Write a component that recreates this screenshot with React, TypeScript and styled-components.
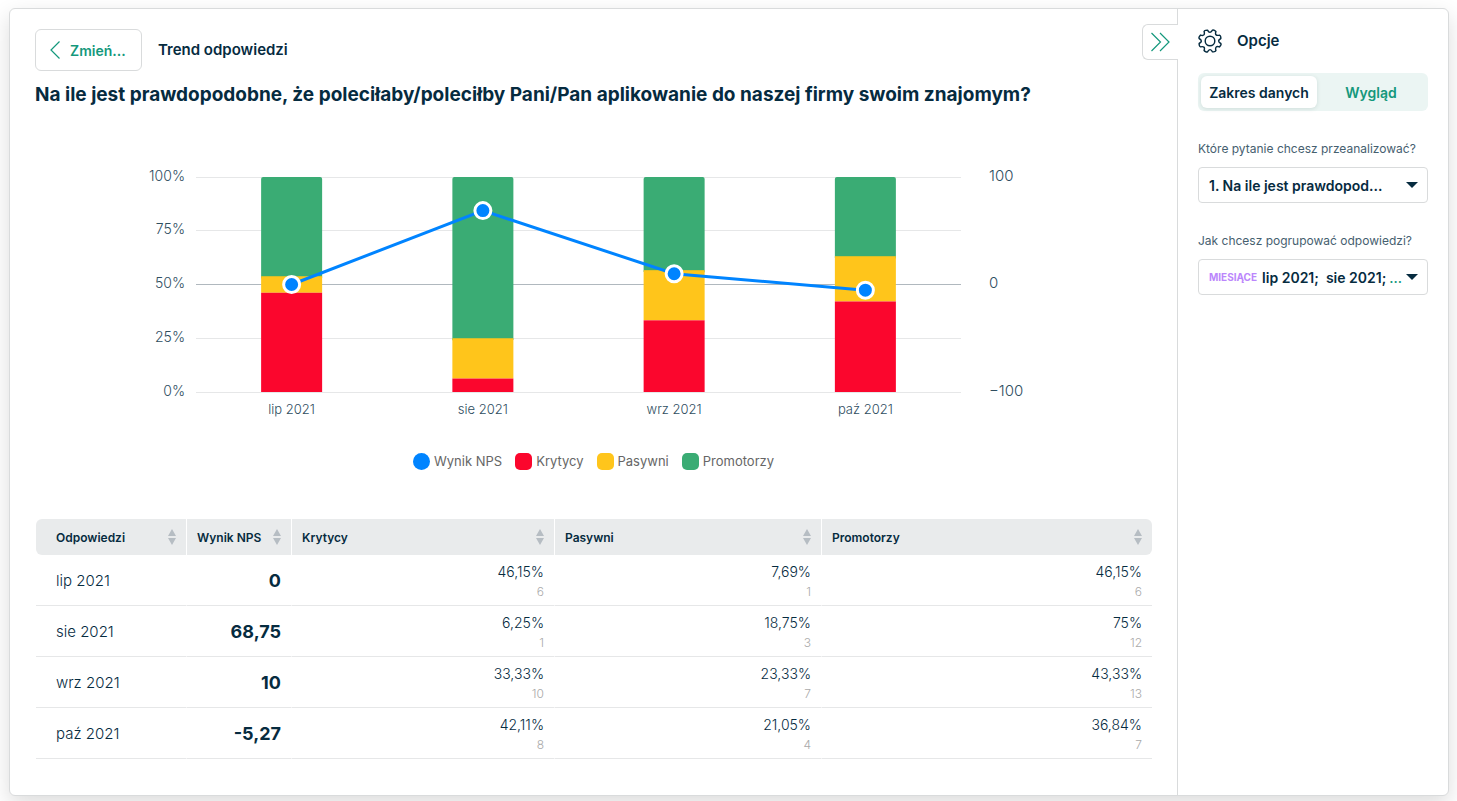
import React from "react";
import styled, { createGlobalStyle } from "styled-components";

const ink = "#062b3f";
const green = "#14987c";
const line = "#d9dbdc";
const soft = "#e6e7e8";

const GlobalStyle = createGlobalStyle`
  * { box-sizing: border-box; }
  body {
    margin: 0;
    background: #fff;
    color: ${ink};
    font-family: Inter, "Liberation Sans", sans-serif;
    font-size: 14px;
  }
  button, select { font-family: inherit; color: inherit; }
`;

const Page = styled.div`
  padding: 8px 8px 5px 9px;
  overflow: hidden;
`;

const Card = styled.div`
  display: flex;
  min-height: calc(100vh - 13px);
  border: 1px solid ${line};
  border-radius: 6px;
  background: #fff;
  box-shadow: 0 8px 22px rgba(0, 0, 0, 0.14);
`;

const Main = styled.main`
  flex: 1;
  min-width: 0;
  padding: 20px 25px;
`;

const Header = styled.header`
  display: flex;
  align-items: center;
  gap: 16px;
`;

const BackButton = styled.button`
  display: flex;
  align-items: center;
  gap: 10px;
  width: 107px;
  height: 42px;
  padding: 0 14px;
  border: 1px solid ${line};
  border-radius: 6px;
  background: #fff;
  color: ${green};
  font-size: 14px;
  font-weight: 600;
`;

const ViewName = styled.h2`
  margin: 0;
  font-size: 15px;
  font-weight: 600;
  line-height: 20px;
`;

const Question = styled.h1`
  margin: 10px 0 42px;
  font-size: 19px;
  font-weight: 700;
  line-height: 27px;
`;

const ChartSvg = styled.svg`
  display: block;
  width: 100%;
  height: auto;
`;

const AxisText = styled.text`
  font-size: 15px;
  font-weight: 300;
  fill: #2f4e5f;
`;

const PercentAxisText = styled(AxisText)`
  font-size: 14px;
`;

const CategoryText = styled.text`
  font-size: 13px;
  font-weight: 300;
  fill: #2f4e5f;
`;

const Legend = styled.ul`
  display: flex;
  justify-content: center;
  gap: 13px;
  margin: 20px 0 47px;
  padding: 0;
  list-style: none;
`;

const LegendItem = styled.li`
  display: flex;
  align-items: center;
  gap: 4px;
  color: #666;
  font-size: 13px;
  line-height: 22px;
`;

const Swatch = styled.span<{ $color: string; $round?: boolean }>`
  width: 17px;
  height: 17px;
  border-radius: ${(p) => (p.$round ? "50%" : "5px")};
  background: ${(p) => p.$color};
`;

const Table = styled.table`
  width: 100%;
  padding-left: 1px;
  border-spacing: 0;
  table-layout: fixed;
`;

const Th = styled.th`
  height: 36px;
  padding: 0 10px;
  border-right: 1px solid #fff;
  background: #e9ebec;
  &:first-child {
    padding-left: 20px;
    border-radius: 6px 0 0 6px;
  }
  &:last-child {
    border-right: 0;
    border-radius: 0 6px 6px 0;
  }
`;

const SortButton = styled.button`
  display: flex;
  align-items: center;
  justify-content: space-between;
  width: 100%;
  padding: 0;
  border: 0;
  background: none;
  font-size: 12px;
  font-weight: 600;
`;

const Td = styled.td`
  padding: 5px 10px;
  border-right: 1px solid #fff;
  border-bottom: 1px solid ${soft};
  text-align: right;
  &:last-child { border-right: 0; }
`;

const RowName = styled.th`
  padding: 0 20px;
  border-right: 1px solid #fff;
  border-bottom: 1px solid ${soft};
  font-size: 15px;
  font-weight: 300;
  text-align: left;
`;

const Score = styled.strong`
  font-size: 18px;
  font-weight: 700;
`;

const Percent = styled.div`
  font-size: 14px;
  font-weight: 300;
  line-height: 24px;
`;

const Count = styled.div`
  color: #aaa;
  font-size: 12px;
  font-weight: 300;
  line-height: 16px;
`;

const Aside = styled.aside`
  position: relative;
  flex: none;
  width: 271px;
  padding: 20px;
  border-left: 1px solid ${line};
`;

const CollapseButton = styled.button`
  position: absolute;
  top: 15px;
  left: -36px;
  display: flex;
  align-items: center;
  width: 36px;
  height: 36px;
  padding: 0 7px;
  border: 1px solid ${line};
  border-right: 0;
  border-radius: 6px 0 0 6px;
  background: #fff;
`;

const AsideTitle = styled.h2`
  display: flex;
  align-items: center;
  gap: 15px;
  margin: 0 0 20px;
  font-size: 15px;
  font-weight: 600;
  line-height: 24px;
`;

const Tabs = styled.div`
  display: flex;
  height: 38px;
  padding: 3px;
  border-radius: 6px;
  background: #ebf5f3;
`;

const Tab = styled.button<{ $active?: boolean }>`
  flex: 1 1 auto;
  padding: 0 6px;
  border: 0;
  border-radius: 6px;
  background: ${(p) => (p.$active ? "#fff" : "transparent")};
  box-shadow: ${(p) => (p.$active ? "0 1px 4px rgba(0, 60, 50, 0.12)" : "none")};
  color: ${(p) => (p.$active ? ink : green)};
  font-size: 14px;
  font-weight: 600;
  flex-basis: ${(p) => (p.$active ? "116px" : "108px")};
`;

const Field = styled.div`
  margin-top: 28px;
`;

const Label = styled.label`
  display: block;
  margin-bottom: 8px;
  color: #46606f;
  font-size: 12px;
  line-height: 20px;
  white-space: nowrap;
`;

const SelectBox = styled.div`
  display: flex;
  align-items: center;
  height: 36px;
  padding: 0 9px 0 10px;
  border: 1px solid ${line};
  border-radius: 4px;
  white-space: nowrap;
`;

const Select = styled.select<{ $grow?: boolean }>`
  flex: ${(p) => (p.$grow ? 1 : "none")};
  min-width: 0;
  padding: 0;
  border: 0;
  appearance: none;
  background: none;
  font-size: 14px;
  font-weight: 600;
`;

const GroupTag = styled.span`
  margin-right: 5px;
  color: #bb86fc;
  font-size: 10px;
  font-weight: 700;
`;

const More = styled.span`
  flex: 1;
  color: ${green};
  font-weight: 500;
  text-align: right;
  margin-right: 4px;
`;

const colors = { nps: "#0084ff", red: "#fb062d", yellow: "#ffc51b", green: "#3aac74" };

type Share = [string, number];
const rows: { name: string; label: string; nps: number; bad: Share; mid: Share; good: Share }[] = [
  { name: "lip 2021", label: "0", nps: 0, bad: ["46,15%", 6], mid: ["7,69%", 1], good: ["46,15%", 6] },
  { name: "sie 2021", label: "68,75", nps: 68.75, bad: ["6,25%", 1], mid: ["18,75%", 3], good: ["75%", 12] },
  { name: "wrz 2021", label: "10", nps: 10, bad: ["33,33%", 10], mid: ["23,33%", 7], good: ["43,33%", 13] },
  { name: "paź 2021", label: "-5,27", nps: -5.27, bad: ["42,11%", 8], mid: ["21,05%", 4], good: ["36,84%", 7] },
];

const plot = { left: 161, right: 926, top: 27, bottom: 242, bar: 61 };
const step = (plot.right - plot.left) / rows.length;
const centre = (i: number) => plot.left + step * (i + 0.5);
const yOf = (share: number) => plot.bottom - (plot.bottom - plot.top) * share;

function Chart() {
  const points = rows.map((r, i) => [centre(i), yOf((r.nps + 100) / 200)]);
  return (
    <ChartSvg viewBox="0 0 1117 280" role="img" aria-label="Trend odpowiedzi">
      {[0, 25, 50, 75, 100].map((v) => {
        const y = Math.floor(yOf(v / 100));
        return (
          <g key={v}>
            <line x1={plot.left} x2={plot.right} y1={y + 0.5} y2={y + 0.5} stroke={v === 50 ? "#b0b8be" : soft} />
            <PercentAxisText x={150} y={y + 4} textAnchor="end">{v}%</PercentAxisText>
          </g>
        );
      })}
      {[["100", 1], ["0", 0.5], ["−100", 0]].map(([t, s]) => (
        <AxisText key={t} x={954} y={Math.floor(yOf(Number(s))) + 4}>{t}</AxisText>
      ))}
      {rows.map((r, i) => {
        const total = r.bad[1] + r.mid[1] + r.good[1];
        const a = yOf(r.bad[1] / total);
        const b = yOf((r.bad[1] + r.mid[1]) / total);
        const x = centre(i) - plot.bar / 2;
        return (
          <g key={r.name}>
            <rect x={x} y={plot.top} width={plot.bar} height={b - plot.top + 3} rx={2} fill={colors.green} />
            <rect x={x} y={b} width={plot.bar} height={a - b} fill={colors.yellow} />
            <rect x={x} y={a} width={plot.bar} height={plot.bottom - a} fill={colors.red} />
            <CategoryText x={centre(i)} y={264} textAnchor="middle">{r.name}</CategoryText>
          </g>
        );
      })}
      <polyline points={points.map((p) => p.join(",")).join(" ")} fill="none" stroke={colors.nps} strokeWidth={3} />
      {points.map(([x, y]) => (
        <circle key={x} cx={x} cy={y} r={8} fill={colors.nps} stroke="#fff" strokeWidth={3} />
      ))}
    </ChartSvg>
  );
}

const SortIcon = () => (
  <svg width="8" height="16" viewBox="0 0 8 16" fill="#b6bdc3" aria-hidden="true">
    <path d="M4 0 8 7H0ZM0 9h8l-4 7Z" />
  </svg>
);

const Caret = () => (
  <svg width="12" height="6" viewBox="0 0 12 6" fill={ink} aria-hidden="true">
    <path d="M0 0h12L6 6Z" />
  </svg>
);

function gearPath() {
  const pts: string[] = [];
  for (let i = 0; i < 8; i++) {
    const at = (deg: number, r: number) => {
      const a = ((i * 45 + deg) * Math.PI) / 180;
      return `${(12.5 + r * Math.cos(a)).toFixed(2)} ${(12.5 + r * Math.sin(a)).toFixed(2)}`;
    };
    pts.push(`${i ? "L" : "M"}${at(13, 11.6)}Q${at(16.5, 12.3)} ${at(22.5, 12)}T${at(32, 11.6)}Q${at(36, 9)} ${at(45, 9)}T${at(58, 11.6)}`);
  }
  return pts.join("") + "Z";
}

const GearIcon = () => (
  <svg width="24" height="24" viewBox="0 0 25 25" fill="none" stroke={ink} strokeWidth="1.5" strokeLinejoin="round" aria-hidden="true">
    <path d={gearPath()} />
    <circle cx="12.5" cy="12.5" r="5" />
  </svg>
);

const columns = ["Odpowiedzi", "Wynik NPS", "Krytycy", "Pasywni", "Promotorzy"];
const widths = [151, 105, 263, 267, 330];

export default function App() {
  return (
    <>
      <GlobalStyle />
      <Page>
        <Card>
          <Main>
            <Header>
              <BackButton type="button">
                <svg width="10" height="18" viewBox="0 0 10 18" fill="none" stroke={green} strokeWidth="1.2" aria-hidden="true">
                  <path d="M9.500 0.500 1 9l8.500 8.500" />
                </svg>
                Zmień...
              </BackButton>
              <ViewName>Trend odpowiedzi</ViewName>
            </Header>
            <Question>
              Na ile jest prawdopodobne, że poleciłaby/poleciłby Pani/Pan aplikowanie do naszej firmy swoim znajomym?
            </Question>
            <Chart />
            <Legend>
              <LegendItem><Swatch $color={colors.nps} $round />Wynik NPS</LegendItem>
              <LegendItem><Swatch $color={colors.red} />Krytycy</LegendItem>
              <LegendItem><Swatch $color={colors.yellow} />Pasywni</LegendItem>
              <LegendItem><Swatch $color={colors.green} />Promotorzy</LegendItem>
            </Legend>
            <Table>
              <colgroup>{widths.map((w, i) => <col key={i} width={w} />)}</colgroup>
              <thead>
                <tr>
                  {columns.map((c) => (
                    <Th key={c} scope="col"><SortButton type="button">{c}<SortIcon /></SortButton></Th>
                  ))}
                </tr>
              </thead>
              <tbody>
                {rows.map((r) => (
                  <tr key={r.name}>
                    <RowName scope="row">{r.name}</RowName>
                    <Td><Score>{r.label}</Score></Td>
                    {[r.bad, r.mid, r.good].map(([p, n], i) => (
                      <Td key={i}><Percent>{p}</Percent><Count>{n}</Count></Td>
                    ))}
                  </tr>
                ))}
              </tbody>
            </Table>
          </Main>
          <Aside>
            <CollapseButton type="button" aria-label="Zwiń">
              <svg width="20" height="20" viewBox="0 0 20 20" fill="none" stroke={green} strokeWidth="1.2" aria-hidden="true">
                <path d="M1.500 1 10.500 10l-9 9M10 1l9 9-9 9" />
              </svg>
            </CollapseButton>
            <AsideTitle><GearIcon />Opcje</AsideTitle>
            <Tabs role="tablist">
              <Tab type="button" role="tab" aria-selected="true" $active>Zakres danych</Tab>
              <Tab type="button" role="tab" aria-selected="false">Wygląd</Tab>
            </Tabs>
            <Field>
              <Label htmlFor="question">Które pytanie chcesz przeanalizować?</Label>
              <SelectBox>
                <Select id="question" $grow><option>1. Na ile jest prawdopod...</option></Select>
                <Caret />
              </SelectBox>
            </Field>
            <Field>
              <Label htmlFor="group">Jak chcesz pogrupować odpowiedzi?</Label>
              <SelectBox>
                <GroupTag>MIESIĄCE</GroupTag>
                <Select id="group"><option>lip 2021;{"\u00a0 "}sie 2021;</option></Select>
                <More>...</More>
                <Caret />
              </SelectBox>
            </Field>
          </Aside>
        </Card>
      </Page>
    </>
  );
}
